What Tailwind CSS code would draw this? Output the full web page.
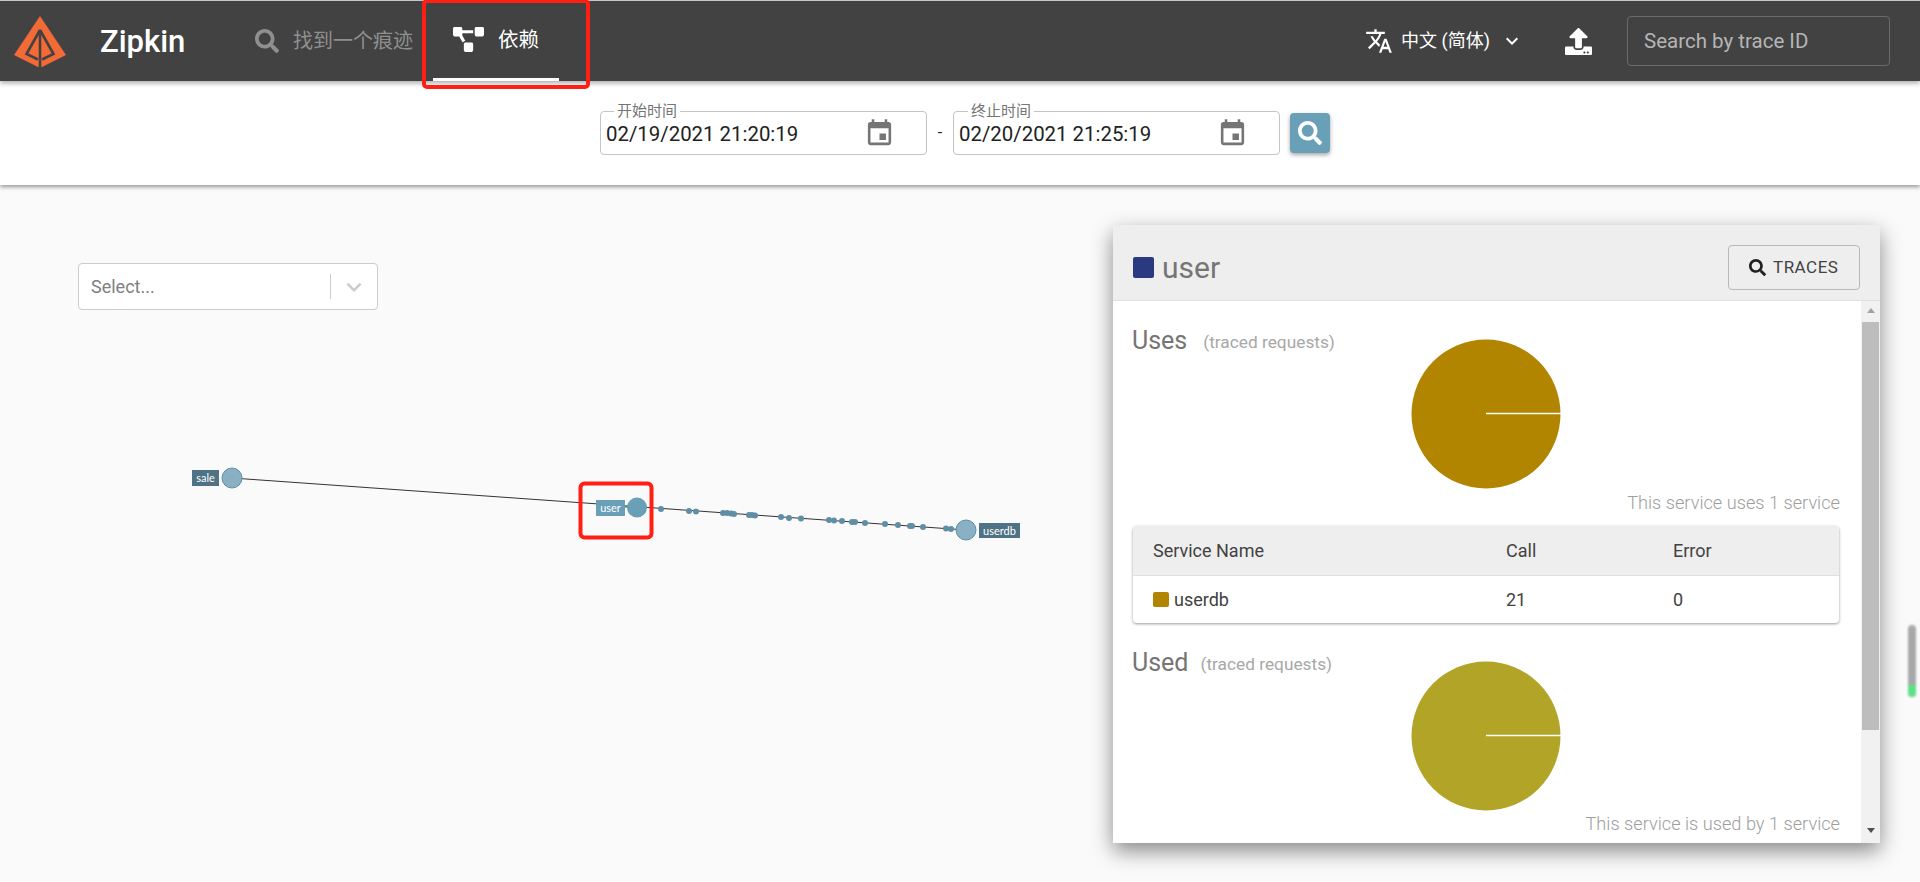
<!DOCTYPE html>
<html lang="zh">
<head>
    <meta charset="UTF-8">
    <title>Zipkin</title>
    <script src="https://cdn.jsdelivr.net/npm/@tailwindcss/browser@4"></script>
</head>
<body class="h-[882px] w-[1920px] overflow-hidden flex flex-col bg-[#fafafa] font-['Roboto','Noto_Sans_CJK_SC',sans-serif]">

    <!-- top bar -->
    <header class="relative z-20 h-[81px] shrink-0 flex items-center border-t border-[#c8c8c8] bg-[#424242] text-white shadow-[0_2px_5px_rgba(0,0,0,0.35)]">
        <svg class="ml-[14px] mt-[1px] w-[52px] h-[51px]" viewBox="14 16 52 51">
            <polygon points="40,16 66,55 42,67 38,67 14,55" fill="#f26a35"/>
            <path d="M40 30 L26.5 54 L38 59.5 M40 30 L53.5 54 L42 59.5" fill="none" stroke="#424242" stroke-width="2.6"/>
            <path d="M40 30 V67" stroke="#424242" stroke-width="2.6"/>
            <polygon points="35,43 35,52 30.5,52" fill="#f26a35"/>
            <polygon points="45,43 45,52 49.5,52" fill="#f26a35"/>
        </svg>
        <div class="ml-[34px] w-[85px] text-[31px] font-medium leading-none whitespace-nowrap">Zipkin</div>

        <div class="ml-[70px] flex items-center text-[#8f8f8f]">
            <svg class="w-[24px] h-[24px]" viewBox="0 0 512 512" fill="currentColor"><path d="M505 442.7L405.3 343c-4.5-4.5-10.6-7-17-7H372c27.6-35.3 44-79.7 44-128C416 93.1 322.9 0 208 0S0 93.1 0 208s93.1 208 208 208c48.3 0 92.7-16.4 128-44v16.3c0 6.4 2.5 12.5 7 17l99.7 99.7c9.4 9.4 24.6 9.4 33.9 0l28.3-28.3c9.4-9.4 9.4-24.6.1-34zM208 336c-70.7 0-128-57.2-128-128 0-70.7 57.2-128 128-128 70.7 0 128 57.2 128 128 0 70.7-57.2 128-128 128z"/></svg>
            <span class="ml-[14px] text-[20px] leading-none">找到一个痕迹</span>
        </div>

        <div class="relative ml-[20px] w-[126px] h-[80px] flex items-center border-b-[3px] border-white">
            <svg class="ml-[20px] w-[31px] h-[25px]" viewBox="0 0 640 512" fill="#fff"><path d="M384 320H256c-17.67 0-32 14.33-32 32v128c0 17.67 14.33 32 32 32h128c17.67 0 32-14.33 32-32V352c0-17.67-14.33-32-32-32zM192 32c0-17.67-14.33-32-32-32H32C14.33 0 0 14.33 0 32v128c0 17.67 14.33 32 32 32h95.72l73.16 128.04C211.98 300.98 232.4 288 256 288h.28L192 175.51V128h224V64H192V32zM608 0H480c-17.67 0-32 14.33-32 32v128c0 17.67 14.33 32 32 32h128c17.67 0 32-14.33 32-32V32c0-17.67-14.33-32-32-32z"/></svg>
            <span class="ml-[14px] mt-[2px] text-[20.5px] leading-none">依赖</span>
            <div class="absolute left-[-11px] top-[-2px] w-[168px] h-[90px] border-[4px] border-[#ff1f14] rounded-[5px]"></div>
        </div>

        <div class="ml-auto flex items-center">
            <svg class="w-[28px] h-[28px]" viewBox="0 0 24 24" fill="#fff"><path d="M12.87 15.07l-2.54-2.51.03-.03c1.74-1.94 2.98-4.17 3.71-6.53H17V4h-7V2H8v2H1v1.99h11.17C11.5 7.92 10.44 9.75 9 11.35 8.07 10.32 7.3 9.19 6.69 8h-2c.73 1.63 1.73 3.17 2.98 4.56l-5.09 5.02L4 19l5-5 3.11 3.11.76-2.04zM18.5 10h-2L12 22h2l1.12-3h4.75L21 22h2l-4.5-12zm-2.62 7l1.62-4.33L19.12 17h-3.24z"/></svg>
            <span class="ml-[8px] text-[18px] leading-none">中文 (简体)</span>
            <svg class="ml-[10px] w-[24px] h-[24px]" viewBox="0 0 24 24" fill="#fff"><path d="M16.59 8.59L12 13.17 7.41 8.59 6 10l6 6 6-6z"/></svg>
            <svg class="ml-[41px] w-[27px] h-[27px]" viewBox="0 0 512 512" fill="#fff"><path d="M296 384h-80c-13.3 0-24-10.7-24-24V192h-87.7c-17.8 0-26.7-21.5-14.1-34.1L242.3 5.7c7.5-7.5 19.8-7.5 27.3 0l152.2 152.2c12.6 12.6 3.7 34.1-14.1 34.1H320v168c0 13.3-10.7 24-24 24zm216-8v112c0 13.3-10.7 24-24 24H24c-13.3 0-24-10.7-24-24V376c0-13.3 10.7-24 24-24h136v8c0 30.9 25.1 56 56 56h80c30.9 0 56-25.1 56-56v-8h136c13.3 0 24 10.7 24 24zm-124 88c0-11-9-20-20-20s-20 9-20 20 9 20 20 20 20-9 20-20zm64 0c0-11-9-20-20-20s-20 9-20 20 9 20 20 20 20-9 20-20z"/></svg>
            <div class="ml-[35px] mr-[30px] w-[263px] h-[50px] flex items-center pl-[16px] rounded-[4px] border border-[#6b6b6b] text-[20.5px] text-[#b5b5b5]">Search by trace ID</div>
        </div>
    </header>

    <!-- date range row -->
    <div class="relative z-10 h-[104px] shrink-0 bg-white flex items-start pl-[600px] pt-[30px] shadow-[0_2px_4px_rgba(0,0,0,0.4)]">
        <div class="relative w-[327px] h-[44px] flex items-center justify-between pl-[5px] pr-[31px] rounded-[4px] border border-[#c4c4c4] text-[20.4px] text-[#212121]">
            <span class="absolute left-[13px] top-[-10px] bg-white px-[3px] text-[15px] leading-[18px] text-[#757575]">开始时间</span>
            <span class="mt-[2px]">02/19/2021 21:20:19</span>
            <svg class="w-[31px] h-[31px]" viewBox="0 0 24 24" fill="#757575"><path d="M17 12h-5v5h5v-5zM16 1v2H8V1H6v2H5c-1.11 0-1.99.9-1.99 2L3 19c0 1.1.89 2 2 2h14c1.1 0 2-.9 2-2V5c0-1.1-.9-2-2-2h-1V1h-2zm3 18H5V8h14v11z"/></svg>
        </div>
        <div class="w-[26px] h-[44px] flex items-center justify-center text-[16px] text-[#212121]">-</div>
        <div class="relative w-[327px] h-[44px] flex items-center justify-between pl-[5px] pr-[31px] rounded-[4px] border border-[#c4c4c4] text-[20.4px] text-[#212121]">
            <span class="absolute left-[14px] top-[-10px] bg-white px-[3px] text-[15px] leading-[18px] text-[#757575]">终止时间</span>
            <span class="mt-[2px]">02/20/2021 21:25:19</span>
            <svg class="w-[31px] h-[31px]" viewBox="0 0 24 24" fill="#757575"><path d="M17 12h-5v5h5v-5zM16 1v2H8V1H6v2H5c-1.11 0-1.99.9-1.99 2L3 19c0 1.1.89 2 2 2h14c1.1 0 2-.9 2-2V5c0-1.1-.9-2-2-2h-1V1h-2zm3 18H5V8h14v11z"/></svg>
        </div>
        <div class="ml-[10px] mt-[2px] w-[40px] h-[40px] flex items-center justify-center rounded-[4px] bg-[#6a9fb8] shadow-[0_2px_4px_rgba(0,0,0,0.35)]">
            <svg class="w-[24px] h-[24px]" viewBox="0 0 512 512" fill="#fff"><path d="M505 442.7L405.3 343c-4.5-4.5-10.6-7-17-7H372c27.6-35.3 44-79.7 44-128C416 93.1 322.9 0 208 0S0 93.1 0 208s93.1 208 208 208c48.3 0 92.7-16.4 128-44v16.3c0 6.4 2.5 12.5 7 17l99.7 99.7c9.4 9.4 24.6 9.4 33.9 0l28.3-28.3c9.4-9.4 9.4-24.6.1-34zM208 336c-70.7 0-128-57.2-128-128 0-70.7 57.2-128 128-128 70.7 0 128 57.2 128 128 0 70.7-57.2 128-128 128z"/></svg>
        </div>
    </div>

    <main class="relative flex-1 flex items-start">
        <!-- dependency graph canvas -->
        <svg class="absolute left-0 top-0 w-[1113px] h-[697px]" viewBox="0 185 1113 697">
            <line x1="232" y1="478" x2="966" y2="530" stroke="#333" stroke-width="1"/>
            <g fill="#5f8ea5">
                <circle cx="661" cy="509" r="3"/><circle cx="689" cy="511" r="3"/><circle cx="696" cy="511.5" r="3"/>
                <circle cx="723" cy="513" r="3"/><circle cx="727" cy="513" r="3"/><circle cx="731" cy="513.5" r="3"/><circle cx="734" cy="514" r="3"/>
                <circle cx="749" cy="515" r="3"/><circle cx="752" cy="515" r="3"/><circle cx="755" cy="515.5" r="3"/>
                <circle cx="781" cy="517" r="3"/><circle cx="789" cy="518" r="3"/><circle cx="801" cy="518.5" r="3"/>
                <circle cx="829" cy="520" r="3"/><circle cx="834" cy="520.5" r="3"/><circle cx="842" cy="521" r="3"/>
                <circle cx="852" cy="522" r="3"/><circle cx="855" cy="522" r="3"/><circle cx="865" cy="523" r="3"/>
                <circle cx="885" cy="524" r="3"/><circle cx="898" cy="525" r="3"/><circle cx="910" cy="526" r="3"/><circle cx="912" cy="526" r="3"/>
                <circle cx="923" cy="527" r="3"/><circle cx="946" cy="528.5" r="3"/><circle cx="951" cy="529" r="3"/>
            </g>
            <rect x="192" y="470" width="27" height="16" fill="#4f7384"/>
            <text x="205.5" y="482" text-anchor="middle" font-family="Lato" font-size="11" fill="#fff">sale</text>
            <circle cx="232" cy="478" r="10" fill="#8ab0c4" stroke="#5f8ea5"/>
            <rect x="596" y="500" width="29" height="16" fill="#6a9fb8"/>
            <text x="610.5" y="511.5" text-anchor="middle" font-family="Lato" font-size="11" fill="#fff">user</text>
            <line x1="625" y1="507" x2="630" y2="507" stroke="#4a4a4a"/>
            <circle cx="637" cy="507.5" r="10" fill="#6a9fb8"/>
            <circle cx="966" cy="530" r="10" fill="#8ab0c4" stroke="#5f8ea5"/>
            <rect x="979" y="523" width="41" height="15" fill="#4f7384"/>
            <text x="999.5" y="534.5" text-anchor="middle" font-family="Lato" font-size="11" fill="#fff">userdb</text>
            <rect x="580.5" y="483.5" width="71" height="54" rx="4" fill="none" stroke="#ff1f14" stroke-width="4"/>
        </svg>

        <!-- service filter -->
        <div class="relative ml-[78px] mt-[78px] w-[300px] h-[47px] flex items-center rounded-[4px] border border-[#cccccc] bg-white pl-[12px] text-[18px] text-[#808080]">
            <span class="flex-1">Select...</span>
            <div class="w-px h-[25px] bg-[#cccccc]"></div>
            <svg class="mx-[8px] w-[30px] h-[30px]" viewBox="0 0 24 24" fill="#cccccc"><path d="M16.59 8.59L12 13.17 7.41 8.59 6 10l6 6 6-6z"/></svg>
        </div>

        <!-- service detail panel -->
        <aside class="relative ml-auto mr-[40px] mt-[40px] w-[767px] h-[618px] flex flex-col bg-white shadow-[0_8px_20px_rgba(0,0,0,0.45)]">
            <div class="h-[76px] shrink-0 flex items-center justify-between pl-[20px] pr-[20px] pt-[10px] bg-[#eeeeee] border-b border-[#e0e0e0]">
                <div class="flex items-center">
                    <div class="w-[21px] h-[21px] rounded-[2px] bg-[#2b3a80]"></div>
                    <span class="ml-[8px] text-[30px] leading-none text-[#757575]">user</span>
                </div>
                <div class="w-[132px] h-[45px] flex items-center pl-[20px] rounded-[4px] border border-[#b8b8b8] text-[17px] tracking-[0.5px] text-[#424242]">
                    <svg class="w-[17px] h-[17px]" viewBox="0 0 512 512" fill="#212121"><path d="M505 442.7L405.3 343c-4.5-4.5-10.6-7-17-7H372c27.6-35.3 44-79.7 44-128C416 93.1 322.9 0 208 0S0 93.1 0 208s93.1 208 208 208c48.3 0 92.7-16.4 128-44v16.3c0 6.4 2.5 12.5 7 17l99.7 99.7c9.4 9.4 24.6 9.4 33.9 0l28.3-28.3c9.4-9.4 9.4-24.6.1-34zM208 336c-70.7 0-128-57.2-128-128 0-70.7 57.2-128 128-128 70.7 0 128 57.2 128 128 0 70.7-57.2 128-128 128z"/></svg>
                    <span class="ml-[7px]">TRACES</span>
                </div>
            </div>

            <div class="flex-1 flex min-h-0">
                <div class="flex-1 overflow-hidden pl-[19px] pr-[21px]">
                    <section class="pt-[26px]">
                        <div class="h-[12px] pt-px flex items-baseline leading-[26px]">
                            <span class="text-[25px] text-[#757575]">Uses</span>
                            <span class="ml-[16px] -translate-y-px text-[17.3px] text-[#a8a8a8]">(traced requests)</span>
                        </div>
                        <svg class="mx-auto w-[150px] h-[150px]" viewBox="0 0 150 150">
                            <circle cx="75" cy="75" r="74.5" fill="#b18500"/>
                            <line x1="75" y1="74.5" x2="150" y2="74.5" stroke="#fff" stroke-width="1.5"/>
                        </svg>
                        <div class="mt-[3px] text-right text-[18.2px] leading-[22px] font-light text-[#9e9e9e]">This service uses 1 service</div>
                    </section>

                    <div class="mt-[12px] mx-px rounded-[4px] bg-white shadow-[0_1px_3px_rgba(0,0,0,0.4)] text-[18px] text-[#424242]">
                        <div class="h-[50px] flex items-center pl-[20px] bg-[#eeeeee] border-b border-[#e0e0e0] rounded-t-[4px]">
                            <span class="w-[353px]">Service Name</span>
                            <span class="w-[167px]">Call</span>
                            <span>Error</span>
                        </div>
                        <div class="h-[47px] flex items-center pl-[20px]">
                            <span class="w-[353px] flex items-center"><i class="w-[16px] h-[15px] rounded-[2px] bg-[#b18500]"></i><span class="ml-[5px]">userdb</span></span>
                            <span class="w-[167px]">21</span>
                            <span>0</span>
                        </div>
                    </div>

                    <section class="mt-[26px]">
                        <div class="h-[12px] pt-px flex items-baseline leading-[26px]">
                            <span class="text-[25px] text-[#757575]">Used</span>
                            <span class="ml-[12px] -translate-y-px text-[17.3px] text-[#a8a8a8]">(traced requests)</span>
                        </div>
                        <svg class="mx-auto w-[150px] h-[150px]" viewBox="0 0 150 150">
                            <circle cx="75" cy="75" r="74.5" fill="#b1a427"/>
                            <line x1="75" y1="74.5" x2="150" y2="74.5" stroke="#fff" stroke-width="1.5"/>
                        </svg>
                        <div class="mt-[2px] text-right text-[18.2px] leading-[22px] font-light text-[#9e9e9e]">This service is used by 1 service</div>
                    </section>
                </div>

                <!-- panel scrollbar -->
                <div class="w-[19px] shrink-0 flex flex-col items-center bg-[#f1f1f1]">
                    <div class="mt-[7px] h-0 w-0 border-x-[4px] border-b-[5px] border-x-transparent border-b-[#a3a3a3]"></div>
                    <div class="mt-[9px] w-[17px] h-[408px] bg-[#bdbdbd]"></div>
                    <div class="mt-[98px] h-0 w-0 border-x-[4px] border-t-[5px] border-x-transparent border-t-[#505050]"></div>
                </div>
            </div>
        </aside>

        <!-- small floating indicator at the window edge -->
        <div class="absolute left-[1908px] top-[440px] w-[8px] h-[72px] rounded-full overflow-hidden flex flex-col justify-end bg-[#a8a8a8] blur-[1px]">
            <div class="h-[12px] bg-[#5de08a]"></div>
        </div>
    </main>
</body>
</html>
